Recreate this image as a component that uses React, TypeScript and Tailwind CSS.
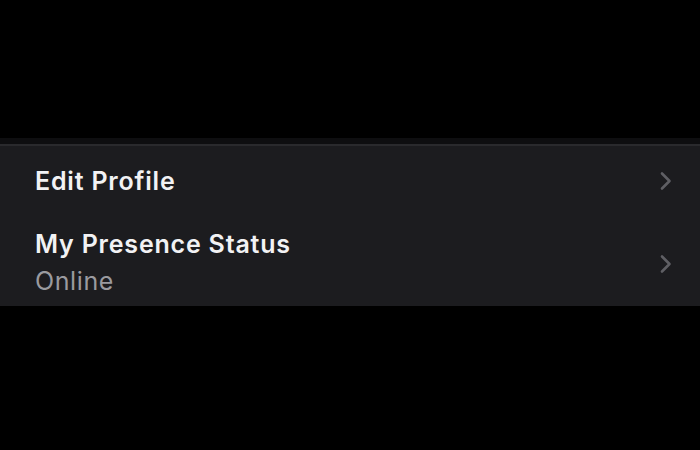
import React from 'react';

const Chevron = ({ className = '' }: { className?: string }) => (
  <svg width="14" height="20" viewBox="0 0 14 20" fill="none" className={`shrink-0 ${className}`}>
    <path
      d="M3 2.5L10.5 10L3 17.5"
      stroke="#5f5f64"
      strokeWidth={2.6}
      strokeLinecap="round"
      strokeLinejoin="round"
    />
  </svg>
);

export default function App() {
  return (
    <div
      className="w-[700px] h-[450px] bg-black flex flex-col overflow-hidden"
      style={{ fontFamily: 'Inter, "Noto Sans", sans-serif' }}
    >
      <div className="h-[138px] shrink-0" />
      <div className="h-[6px] shrink-0 bg-[#0e0e10]" />
      <div className="h-[2px] shrink-0 bg-[#2a2a2d]" />
      <div className="bg-[#1c1c1f] flex flex-col shrink-0">
        <div className="h-[70px] flex items-center justify-between pl-[35px] pr-[27px]">
          <span className="text-[25px] font-semibold text-[#f2f2f4] tracking-[0.8px] pt-[1px]">
            Edit Profile
          </span>
          <Chevron />
        </div>
        <div className="h-[90px] flex items-center justify-between pl-[35px] pr-[27px]">
          <div className="flex flex-col pt-[3px]">
            <span className="text-[25px] leading-[37px] font-semibold text-[#f2f2f4] tracking-[0.8px]">
              My Presence Status
            </span>
            <span className="text-[25px] leading-[37px] text-[#9a9a9f] tracking-[0.6px]">Online</span>
          </div>
          <Chevron className="mt-[6px]" />
        </div>
      </div>
    </div>
  );
}
